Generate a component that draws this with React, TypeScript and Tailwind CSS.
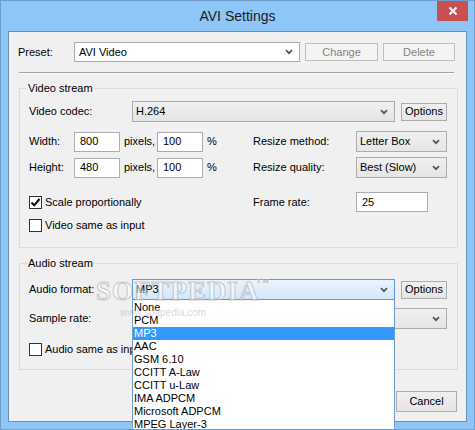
import React from "react";

const Chevron = () => (
  <svg width="8" height="6" viewBox="0 0 8 6" className="shrink-0">
    <path d="M1 1.2 L4 4.2 L7 1.2" fill="none" stroke="#545454" strokeWidth="1.7" />
  </svg>
);

const Button = ({ label, w, h = 18, disabled = false }: any) => (
  <div
    className={
      "flex items-center justify-center border shrink-0 " +
      (disabled
        ? "border-[#bfbfbf] bg-[#f4f4f4] text-[#838383]"
        : "border-[#acacac] bg-gradient-to-b from-[#f0f0f0] to-[#e5e5e5] text-black")
    }
    style={{ width: w, height: h }}
  >
    {label}
  </div>
);

const Combo = ({ value, w, white = false, open = false }: any) => (
  <div
    className={
      "flex items-center justify-between h-[21px] border pl-[3px] pr-[6px] shrink-0 " +
      (open
        ? "border-[#569de5] bg-gradient-to-b from-[#ebf4fc] to-[#d3e7fc]"
        : white
        ? "border-[#acacac] bg-white pl-[5px]"
        : "border-[#acacac] bg-gradient-to-b from-[#f0f0f0] to-[#e5e5e5]")
    }
    style={{ width: w }}
  >
    <span>{value}</span>
    <Chevron />
  </div>
);

const TextBox = ({ value, w }: any) => (
  <div
    className="h-[20px] border border-[#abadb3] bg-white flex items-center pl-[5px] shrink-0"
    style={{ width: w }}
  >
    {value}
  </div>
);

const CheckBox = ({ label, checked = false }: any) => (
  <div className="flex items-center h-[14px]">
    <div className="w-[13px] h-[13px] border border-[#333333] bg-white flex items-center justify-center shrink-0">
      {checked && (
        <svg width="11" height="11" viewBox="0 0 11 11">
          <path d="M1.5 5.5 L4.2 8.3 L9.5 2" fill="none" stroke="#000" strokeWidth="2" />
        </svg>
      )}
    </div>
    <span className="ml-[3px] whitespace-nowrap">{label}</span>
  </div>
);

const GroupBox = ({ title, h, children, className = "" }: any) => (
  <div
    className={"relative ml-[10px] w-[439px] border border-[#dcdcdc] pl-[9px] " + className}
    style={{ height: h }}
  >
    <span className="absolute left-[7px] top-[-8px] px-[1px] bg-[#f0f0f0] leading-[14px]">
      {title}
    </span>
    {children}
  </div>
);

const audioFormats = [
  "None",
  "PCM",
  "MP3",
  "AAC",
  "GSM 6.10",
  "CCITT A-Law",
  "CCITT u-Law",
  "IMA ADPCM",
  "Microsoft ADPCM",
  "MPEG Layer-3",
  "Windows Media Audio",
];

const App = () => {
  return (
    <div className="relative w-[475px] h-[430px] overflow-hidden bg-[#8ec7f7] border border-[#6c9dcc] flex flex-col font-['Liberation_Sans',Arial,sans-serif] text-[11px] text-black">
      {/* title bar */}
      <div className="relative h-[30px] shrink-0 flex items-center justify-center">
        <span className="text-[14px] text-[#1b1b1b]">AVI Settings</span>
        <div className="absolute right-[6px] top-0 w-[31px] h-[20px] bg-[#c75050] flex items-center justify-center">
          <svg width="10" height="10" viewBox="0 0 10 10">
            <path d="M1.5 1.5 L8.5 8.5 M8.5 1.5 L1.5 8.5" stroke="#fff" strokeWidth="2" />
          </svg>
        </div>
      </div>

      {/* client area */}
      <div className="mx-[7px] h-[391px] shrink-0 border border-[#6b8eb3] bg-[#f0f0f0] flex flex-col">
        {/* preset row */}
        <div className="mt-[10px] pl-[9px] flex items-center h-[20px]">
          <span className="w-[56px]">Preset:</span>
          <div className="h-[20px] w-[226px] border border-[#acacac] bg-white flex items-center justify-between pl-[4px] pr-[6px]">
            <span>AVI Video</span>
            <Chevron />
          </div>
          <div className="ml-[5px]">
            <Button label="Change" w={73} disabled />
          </div>
          <div className="ml-[5px]">
            <Button label="Delete" w={72} disabled />
          </div>
        </div>

        <div className="mt-[10px] ml-[10px] w-[435px] border-t border-[#a0a0a0] border-b border-b-white" />

        {/* video stream */}
        <GroupBox title="Video stream" h={160} className="mt-[14px]">
          <div className="mt-[12px] flex items-center h-[21px]">
            <span className="w-[103px]">Video codec:</span>
            <Combo value="H.264" w={263} />
            <div className="ml-[6px]">
              <Button label="Options" w={46} />
            </div>
          </div>
          <div className="mt-[9px] flex items-center h-[21px]">
            <span className="w-[45px]">Width:</span>
            <TextBox value="800" w={46} />
            <span className="w-[37px] pl-[4px]">pixels,</span>
            <TextBox value="100" w={46} />
            <span className="w-[50px] pl-[4px]">%</span>
            <span className="w-[103px]">Resize method:</span>
            <Combo value="Letter Box" w={91} />
          </div>
          <div className="mt-[5px] flex items-center h-[21px]">
            <span className="w-[45px]">Height:</span>
            <TextBox value="480" w={46} />
            <span className="w-[37px] pl-[4px]">pixels,</span>
            <TextBox value="100" w={46} />
            <span className="w-[50px] pl-[4px]">%</span>
            <span className="w-[103px]">Resize quality:</span>
            <Combo value="Best (Slow)" w={91} />
          </div>
          <div className="mt-[14px] flex items-center h-[20px]">
            <div className="w-[224px]">
              <CheckBox label="Scale proportionally" checked />
            </div>
            <span className="w-[103px]">Frame rate:</span>
            <TextBox value="25" w={72} />
          </div>
          <div className="mt-[6px]">
            <CheckBox label="Video same as input" />
          </div>
        </GroupBox>

        {/* audio stream */}
        <GroupBox title="Audio stream" h={107} className="mt-[15px]">
          <div className="mt-[15px] flex items-center h-[21px]">
            <span className="w-[103px]">Audio format:</span>
            <div className="relative">
              <Combo value="MP3" w={263} open />
              {/* open drop-down list */}
              <div className="absolute z-20 left-0 top-[21px] w-[263px] border border-[#6a9fd8] border-t-0 bg-white pt-[1px]">
                {audioFormats.map((f) => (
                  <div
                    key={f}
                    className={
                      "h-[13px] leading-[13px] pl-[1px] " +
                      (f === "MP3" ? "bg-[#3399ff] text-white" : "text-black")
                    }
                  >
                    {f}
                  </div>
                ))}
              </div>
            </div>
            <div className="ml-[6px]">
              <Button label="Options" w={46} />
            </div>
          </div>
          <div className="mt-[8px] flex items-center h-[21px]">
            <span className="w-[103px]">Sample rate:</span>
            <Combo value="44100 Hz" w={315} />
          </div>
          <div className="mt-[13px]">
            <CheckBox label="Audio same as input" />
          </div>
        </GroupBox>

        <div className="mt-[21px] pr-[9px] flex justify-end">
          <div className="mr-[6px]">
            <Button label="OK" w={61} h={21} />
          </div>
          <Button label="Cancel" w={61} h={21} />
        </div>
      </div>

      {/* watermark */}
      <div className="absolute z-30 left-[95px] top-[276px] pointer-events-none select-none">
        <div className="relative text-[27px] leading-[28px] font-bold tracking-[1px] text-white/50 [-webkit-text-stroke:1px_rgba(140,140,140,0.45)] font-['Liberation_Serif',serif]">
          SOFTPEDIA
          <span className="absolute right-[-10px] top-[0px] text-[7px] leading-[8px] [-webkit-text-stroke:0px] text-[#b8b8b8]">TM</span>
        </div>
        <div className="ml-[24px] text-[10px] text-[#bdbdbd]/60">www.softpedia.com</div>
      </div>
    </div>
  );
};

export default App;
